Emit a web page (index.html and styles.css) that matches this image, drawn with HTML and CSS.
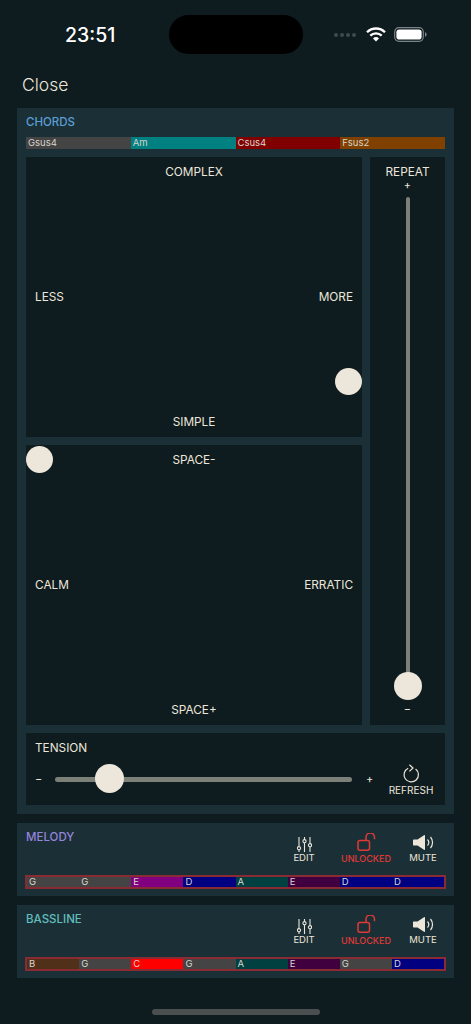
FILE: index.html
```html
<!DOCTYPE html>
<html lang="en">
<head>
<meta charset="utf-8">
<title>Chords</title>
<link rel="stylesheet" href="styles.css">
</head>
<body>
<div class="screen">
  <header class="status">
    <span class="time">23:51</span>
    <span class="island"></span>
    <span class="status-right">
      <span class="dots"><i></i><i></i><i></i><i></i></span>
      <svg class="wifi" viewBox="0 0 20 15" width="20" height="15"><path d="M1 5.2a12.8 12.8 0 0 1 18 0" fill="none" stroke="#fff" stroke-width="2.3"/><path d="M4.3 8.6a8.2 8.2 0 0 1 11.4 0" fill="none" stroke="#fff" stroke-width="2.3"/><path d="M7 11.4a4 4 0 0 1 6 0L10 14.6z" fill="#fff"/></svg>
      <svg class="battery" viewBox="0 0 33 15" width="33" height="15"><rect x=".7" y=".7" width="28.6" height="13.6" rx="4.2" fill="none" stroke="#7a8487" stroke-width="1.2"/><rect x="2.4" y="2.4" width="25.2" height="10.2" rx="2.8" fill="#fff"/><path d="M31 5.2c1.1.3 1.6 1.2 1.6 2.3s-.5 2-1.6 2.3z" fill="#7a8487"/></svg>
    </span>
  </header>

  <div class="close">Close</div>

  <section class="panel chords">
    <h2 class="title title-chords">CHORDS</h2>
    <div class="chord-bar">
      <span class="cell c-grey">Gsus4</span>
      <span class="cell c-teal">Am</span>
      <span class="cell c-maroon">Csus4</span>
      <span class="cell c-brown">Fsus2</span>
    </div>
    <div class="pads">
      <div class="pad-col">
        <div class="pad">
          <span class="lbl">COMPLEX</span>
          <div class="pad-mid"><span class="lbl">LESS</span><span class="lbl">MORE</span></div>
          <span class="lbl">SIMPLE</span>
          <span class="thumb thumb-a"></span>
        </div>
        <div class="pad">
          <span class="lbl">SPACE-</span>
          <div class="pad-mid"><span class="lbl">CALM</span><span class="lbl">ERRATIC</span></div>
          <span class="lbl">SPACE+</span>
          <span class="thumb thumb-b"></span>
        </div>
      </div>
      <div class="repeat">
        <span class="lbl">REPEAT</span>
        <span class="sign sign-plus">+</span>
        <div class="v-track"><span class="thumb thumb-v"></span></div>
        <span class="sign sign-minus">−</span>
      </div>
    </div>
    <div class="tension">
      <div class="tension-main">
        <span class="lbl">TENSION</span>
        <div class="h-row">
          <span class="sign">−</span>
          <div class="h-track"><span class="thumb thumb-h"></span></div>
          <span class="sign">+</span>
        </div>
      </div>
      <div class="action refresh">
        <svg viewBox="0 0 18 20" width="18" height="20"><path d="M6.2 4.2A7.2 7.2 0 1 0 13.6 5" fill="none" stroke="#ede6da" stroke-width="1.2"/><path d="M7.4 .8l3.6 3.2-3.6 3.4" fill="none" stroke="#ede6da" stroke-width="1.2"/></svg>
        <span>REFRESH</span>
      </div>
    </div>
  </section>

  <section class="panel track">
    <div class="track-head">
      <h2 class="title title-melody">MELODY</h2>
      <div class="actions">
        <div class="action a-edit">
          <svg viewBox="0 0 15 15" width="15" height="15"><g fill="none" stroke="#ede6da" stroke-width="1.1"><path d="M2 0v9.500M2 13v2M7.500 0v2.500M7.500 6v9M13 0v6.500M13 10v5"/><circle cx="2" cy="11.200" r="1.600"/><circle cx="7.500" cy="4.200" r="1.600"/><circle cx="13" cy="8.200" r="1.600"/></g></svg>
          <span>EDIT</span>
        </div>
        <div class="action a-lock">
          <svg viewBox="0 0 19 18" width="19" height="18"><rect x="1" y="7.500" width="11.500" height="9.700" rx="2" fill="none" stroke="#e03a36" stroke-width="1.500"/><path d="M9 7.500V4.200a4 4 0 0 1 8.500 0v2" fill="none" stroke="#e03a36" stroke-width="1.500"/></svg>
          <span>UNLOCKED</span>
        </div>
        <div class="action a-mute">
          <svg viewBox="0 0 21 15" width="21" height="15"><path d="M1 4.500h3.500L11 .3c.6-.4 1-.1 1 .5v13.400c0 .6-.4.900-1 .5L4.500 10.500H1c-.6 0-1-.4-1-1v-4c0-.6.4-1 1-1z" fill="#ede6da"/><path d="M14.500 4.500a4.500 4.500 0 0 1 0 6M17.500 2a8.500 8.500 0 0 1 0 11" fill="none" stroke="#ede6da" stroke-width="1.200"/></svg>
          <span>MUTE</span>
        </div>
      </div>
    </div>
    <div class="note-bar">
      <span class="cell c-grey">G</span><span class="cell c-grey">G</span><span class="cell c-purple">E</span><span class="cell c-navy">D</span><span class="cell c-pine">A</span><span class="cell c-plum">E</span><span class="cell c-navy">D</span><span class="cell c-navy">D</span>
    </div>
  </section>

  <section class="panel track">
    <div class="track-head">
      <h2 class="title title-bass">BASSLINE</h2>
      <div class="actions">
        <div class="action a-edit">
          <svg viewBox="0 0 15 15" width="15" height="15"><g fill="none" stroke="#ede6da" stroke-width="1.1"><path d="M2 0v9.500M2 13v2M7.500 0v2.500M7.500 6v9M13 0v6.500M13 10v5"/><circle cx="2" cy="11.200" r="1.600"/><circle cx="7.500" cy="4.200" r="1.600"/><circle cx="13" cy="8.200" r="1.600"/></g></svg>
          <span>EDIT</span>
        </div>
        <div class="action a-lock">
          <svg viewBox="0 0 19 18" width="19" height="18"><rect x="1" y="7.500" width="11.500" height="9.700" rx="2" fill="none" stroke="#e03a36" stroke-width="1.500"/><path d="M9 7.500V4.200a4 4 0 0 1 8.500 0v2" fill="none" stroke="#e03a36" stroke-width="1.500"/></svg>
          <span>UNLOCKED</span>
        </div>
        <div class="action a-mute">
          <svg viewBox="0 0 21 15" width="21" height="15"><path d="M1 4.500h3.500L11 .3c.6-.4 1-.1 1 .5v13.400c0 .6-.4.900-1 .5L4.500 10.500H1c-.6 0-1-.4-1-1v-4c0-.6.4-1 1-1z" fill="#ede6da"/><path d="M14.500 4.500a4.500 4.500 0 0 1 0 6M17.500 2a8.500 8.500 0 0 1 0 11" fill="none" stroke="#ede6da" stroke-width="1.200"/></svg>
          <span>MUTE</span>
        </div>
      </div>
    </div>
    <div class="note-bar">
      <span class="cell c-umber">B</span><span class="cell c-grey">G</span><span class="cell c-red">C</span><span class="cell c-grey">G</span><span class="cell c-pine">A</span><span class="cell c-plum">E</span><span class="cell c-grey">G</span><span class="cell c-navy">D</span>
    </div>
  </section>

  <div class="home"></div>
</div>
</body>
</html>
```
FILE: styles.css
```css
* { box-sizing: border-box; }
html, body { margin: 0; padding: 0; background: #0e1b1f; }
body { font-family: Inter, "Liberation Sans", sans-serif; color: #ede6da; }
.screen { width: 471px; height: 1024px; overflow: hidden; display: flex; flex-direction: column; align-items: center; }

.status { width: 100%; height: 54px; padding-top: 15px; position: relative; display: flex; justify-content: center; }
.time { position: absolute; left: 65px; top: 24px; font-size: 19.5px; line-height: 22px; font-weight: 500; color: #fff; }
.island { width: 134px; height: 39px; border-radius: 20px; background: #000; }
.status-right { position: absolute; left: 334px; top: 27px; display: flex; align-items: center; }
.dots { display: flex; gap: 2px; width: 32px; }
.dots i { width: 4px; height: 4px; border-radius: 50%; background: #3d4a4e; }
.battery { margin-left: 8px; }

.close { width: 100%; padding-left: 22px; margin-top: 20px; height: 34px; font-size: 17.5px; line-height: 22px; font-weight: 300; }

.panel { width: 437px; background: #1b2f36; padding: 0 9px; }
.chords { height: 706px; }
.title { margin: 0; font-size: 11.5px; line-height: 14px; font-weight: 500; }
.title-chords { color: #5b9fd6; padding-top: 7px; }
.title-melody { color: #9485dc; }
.title-bass { color: #62bdbd; }

.chord-bar { display: grid; grid-template-columns: repeat(4, 1fr); height: 12px; margin-top: 8px; }
.cell { font-size: 9.5px; line-height: 12px; padding-left: 2px; color: #d8d4cc; overflow: hidden; }
.c-grey { background: #444; }
.c-teal { background: #008080; }
.c-maroon { background: #800000; }
.c-brown { background: #804000; }
.c-purple { background: #800080; }
.c-navy { background: #000080; }
.c-pine { background: #004040; }
.c-plum { background: #400040; }
.c-umber { background: #503018; }
.c-red { background: #ff0000; }

.pads { display: flex; gap: 8px; margin-top: 8px; height: 568px; }
.pad-col { width: 336px; display: flex; flex-direction: column; gap: 8px; }
.pad { flex: 1; position: relative; background: #0e1b1f; padding: 8px 9px; display: flex; flex-direction: column; justify-content: space-between; align-items: center; }
.pad-mid { width: 100%; display: flex; justify-content: space-between; }
.lbl { display: block; font-size: 11.8px; line-height: 14px; font-weight: 400; color: #ede6da; }

.thumb { position: absolute; border-radius: 50%; background: #ede6da; width: 27px; height: 27px; }
.thumb-a { left: 309px; top: 211px; }
.thumb-b { left: 0; top: 1px; }

.repeat { flex: 1; position: relative; background: #0e1b1f; padding-top: 8px; display: flex; flex-direction: column; align-items: center; }
.sign { font-size: 11px; line-height: 12px; color: #ede6da; }
.v-track { width: 4px; height: 490px; margin-top: 6px; background: #7b8078; border-radius: 2px; position: relative; }
.thumb-v { width: 28px; height: 28px; left: -12px; top: 475px; }
.sign-minus { margin-top: 16px; }

.tension { height: 72px; margin-top: 8px; background: #0e1b1f; padding: 8px 9px 0; display: flex; }
.tension-main { width: 342px; }
.h-row { display: flex; align-items: center; margin-top: 18px; height: 12px; }
.h-row .sign { width: 20px; }
.h-track { width: 297px; height: 5px; border-radius: 3px; background: #7b8078; position: relative; }
.h-row .sign:last-child { margin-left: 14px; width: 10px; }
.thumb-h { width: 29px; height: 29px; left: 40px; top: -13px; }

.action { display: flex; flex-direction: column; align-items: center; font-size: 9.5px; line-height: 12px; color: #ede6da; }
.refresh { width: 50px; margin-left: 9px; margin-top: 23px; font-size: 10px; }

.track { height: 73px; margin-top: 9px; position: relative; }
.track-head { height: 52px; display: flex; justify-content: space-between; }
.track-head .title { padding-top: 7px; }
.actions { display: flex; }
.track .action { height: 32px; justify-content: flex-end; margin-top: 10px; }
.a-edit { width: 30px; margin-right: 17px; }
.a-lock { width: 60px; margin-right: 7px; color: #e03a36; font-size: 9px; font-weight: 500; }
.a-mute { width: 40px; margin-right: 2px; font-size: 9.5px; }
.a-edit span, .a-mute span { margin-bottom: 1px; }
.a-lock svg, .a-mute svg { margin-bottom: 2px; }
.note-bar { margin: 0 -1px; display: grid; grid-template-columns: repeat(8, 1fr); height: 14px; border: 2px solid #8a2a32; }
.note-bar .cell { line-height: 10px; padding-left: 2px; }

.home { width: 168px; height: 6px; border-radius: 3px; background: #4a4f50; margin-top: 31px; }
```
